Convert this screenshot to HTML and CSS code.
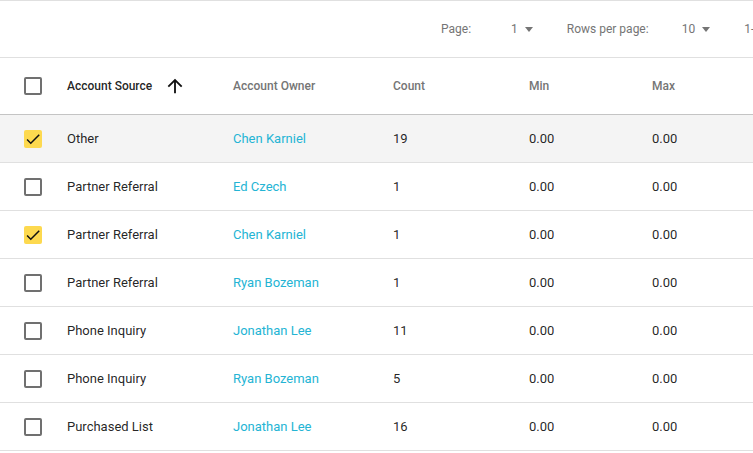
FILE: index.html
```html
<!DOCTYPE html>
<html lang="en">
<head>
  <meta charset="UTF-8" />
  <title>Accounts</title>
  <link rel="stylesheet" href="styles.css">
</head>
<body>
  <div class="toolbar">
    <span class="tb-label">Page:</span>
    <span class="tb-value">1</span><span class="caret"></span>
    <span class="tb-label rows">Rows per page:</span>
    <span class="tb-value">10</span><span class="caret"></span>
    <span class="tb-range">1-10 of 52</span>
  </div>

  <table class="grid">
    <colgroup>
      <col class="c-check"><col class="c-source"><col class="c-owner"><col class="c-count"><col class="c-min"><col class="c-max">
    </colgroup>
    <thead>
      <tr>
        <th><span class="box"></span></th>
        <th class="sorted"><span class="th-text">Account Source</span>
          <svg class="sort" viewBox="0 0 24 24" width="22" height="22"><path d="M4 12l1.41 1.41L11 7.83V20h2V7.83l5.58 5.59L20 12l-8-8-8 8z"/></svg>
        </th>
        <th>Account Owner</th>
        <th>Count</th>
        <th>Min</th>
        <th>Max</th>
      </tr>
    </thead>
    <tbody>
      <tr class="hover">
        <td><span class="box checked"><svg viewBox="0 0 24 24" width="18" height="18"><path d="M9 16.2L4.8 12l-1.4 1.4L9 19 21 7l-1.4-1.4L9 16.2z"/></svg></span></td>
        <td>Other</td><td class="link">Chen Karniel</td><td>19</td><td>0.00</td><td>0.00</td>
      </tr>
      <tr>
        <td><span class="box"></span></td>
        <td>Partner Referral</td><td class="link">Ed Czech</td><td>1</td><td>0.00</td><td>0.00</td>
      </tr>
      <tr>
        <td><span class="box checked"><svg viewBox="0 0 24 24" width="18" height="18"><path d="M9 16.2L4.8 12l-1.4 1.4L9 19 21 7l-1.4-1.4L9 16.2z"/></svg></span></td>
        <td>Partner Referral</td><td class="link">Chen Karniel</td><td>1</td><td>0.00</td><td>0.00</td>
      </tr>
      <tr>
        <td><span class="box"></span></td>
        <td>Partner Referral</td><td class="link">Ryan Bozeman</td><td>1</td><td>0.00</td><td>0.00</td>
      </tr>
      <tr>
        <td><span class="box"></span></td>
        <td>Phone Inquiry</td><td class="link">Jonathan Lee</td><td>11</td><td>0.00</td><td>0.00</td>
      </tr>
      <tr>
        <td><span class="box"></span></td>
        <td>Phone Inquiry</td><td class="link">Ryan Bozeman</td><td>5</td><td>0.00</td><td>0.00</td>
      </tr>
      <tr>
        <td><span class="box"></span></td>
        <td>Purchased List</td><td class="link">Jonathan Lee</td><td>16</td><td>0.00</td><td>0.00</td>
      </tr>
    </tbody>
  </table>
</body>
</html>
```

FILE: styles.css
```css
body { margin: 0; background: #fff; font-family: Roboto, "Liberation Sans", sans-serif; overflow: hidden; }

.toolbar {
  display: flex; align-items: center; height: 56px; width: 900px;
  padding-left: 441px; border-top: 1px solid #e0e0e0; border-bottom: 1px solid #e0e0e0;
  font-size: 12px; color: #757575; white-space: nowrap;
}
.tb-label { margin-right: 40px; }
.tb-label.rows { margin-right: 33px; }
.tb-value { color: #757575; }
.caret {
  width: 0; height: 0; margin: 1px 34px 0 7px;
  border-left: 4px solid transparent; border-right: 4px solid transparent; border-top: 5px solid #757575;
}

.grid { table-layout: fixed; border-collapse: collapse; width: 800px; }
.c-check { width: 67px; }
.c-source { width: 166px; }
.c-owner { width: 160px; }
.c-count { width: 136px; }
.c-min { width: 123px; }
.c-max { width: 148px; }

th, td { padding: 0; text-align: left; white-space: nowrap; }
th:first-child, td:first-child { padding-left: 24px; }
th {
  height: 56px; font-size: 12px; font-weight: 500; color: #757575;
  border-bottom: 1px solid #c4c4c4; vertical-align: middle;
}
th.sorted { color: rgba(0,0,0,0.87); }
.th-text { vertical-align: middle; }
.sort { vertical-align: middle; margin-left: 9px; fill: #111; }
td {
  height: 47px; font-size: 13px; color: rgba(0,0,0,0.87);
  border-bottom: 1px solid #e0e0e0;
}
tr.hover td { background: #f4f4f4; }
td.link { color: #24b4d4; }

.box {
  display: block; box-sizing: border-box; width: 18px; height: 18px;
  border: 2px solid #707070; border-radius: 2px;
}
.box.checked { background: #fdd94f; border: none; }
.box.checked svg { display: block; fill: #111; }
```
